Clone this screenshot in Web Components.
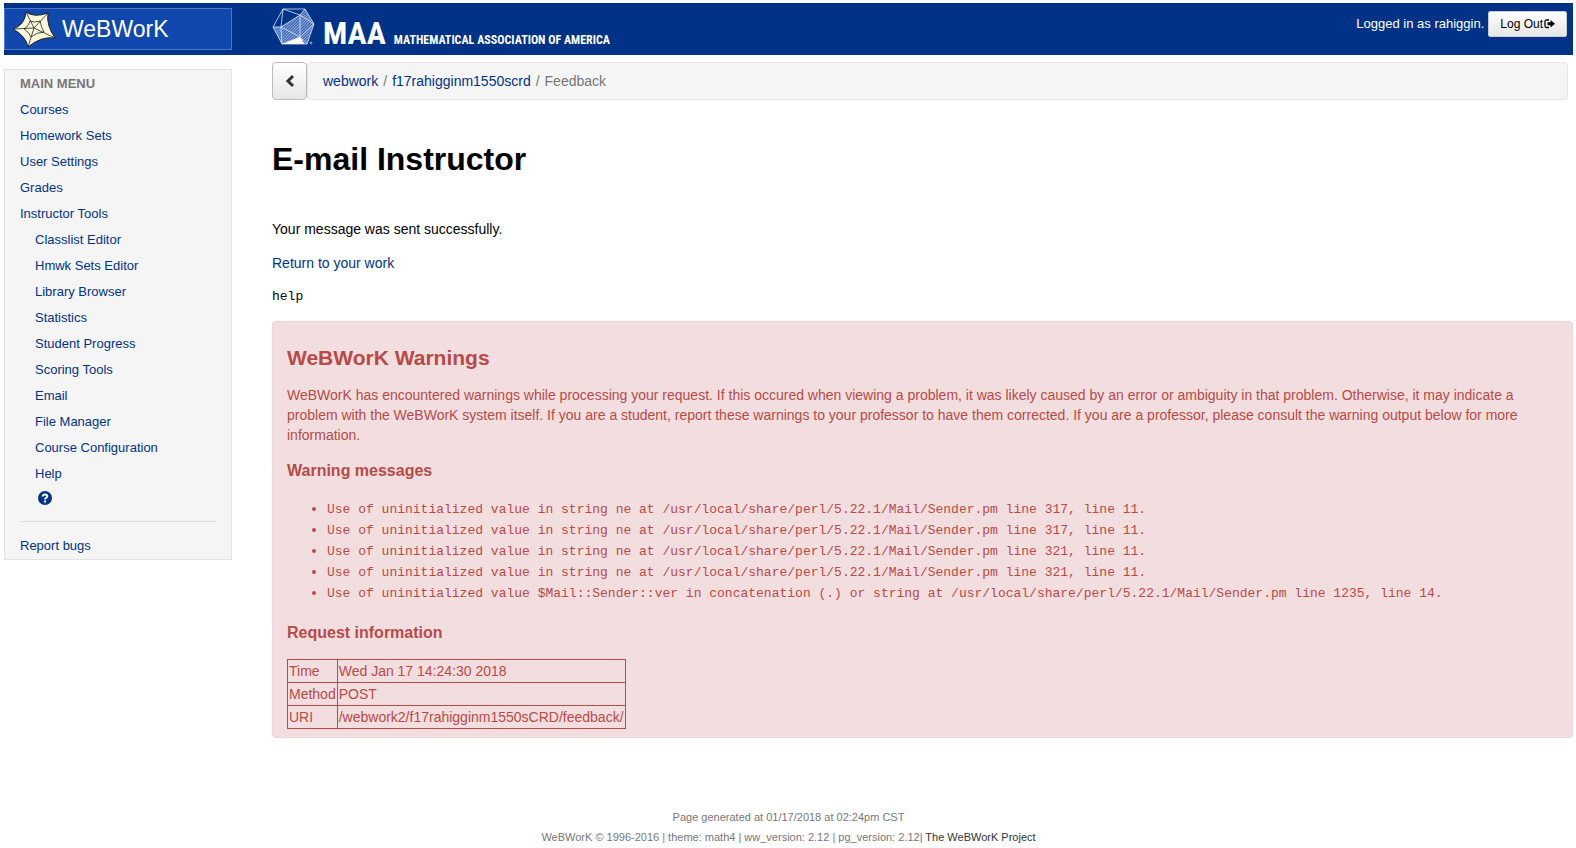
<!DOCTYPE html>
<html lang="en">
<head>
<meta charset="utf-8">
<title>WeBWorK : Feedback</title>
<style>
    body {
        margin: 3px 3px 0 4px;
        background: #fff;
        color: #000;
        font: 14px/20px "Liberation Sans", Arial, sans-serif;
    }
    .columns {
        display: grid;
        grid-template-columns: 228px 1fr;
        column-gap: 40px;
        align-items: start;
    }
    ww-sidebar { margin-top: 14px; }
    main { padding-top: 7px; min-width: 0; }
    h1 { margin: 39px 0 40px; font-size: 32px; line-height: 40px; }
    main p { margin: 0 0 14px; }
    main pre { margin: 0 0 14px; }
    main pre { font: 13px/20px "Liberation Mono", "Courier New", monospace; }
    code { font: 13px/14px "Liberation Mono", "Courier New", monospace; }
    main p a { color: #003388; text-decoration: none; }
</style>
</head>
<body>

<ww-masthead user="rahiggin"></ww-masthead>

<div class="columns">
    <ww-sidebar heading="Main Menu"></ww-sidebar>
    <main>
        <ww-breadcrumb>
            <a href="#webwork">webwork</a>
            <a href="#course">f17rahigginm1550scrd</a>
            <span>Feedback</span>
        </ww-breadcrumb>
        <h1>E-mail Instructor</h1>
        <p>Your message was sent successfully.</p>
        <p><a href="#work">Return to your work</a></p>
        <pre>help</pre>
        <ww-warnings>
            <li><code>Use of uninitialized value in string ne at /usr/local/share/perl/5.22.1/Mail/Sender.pm line 317, line 11.</code></li>
            <li><code>Use of uninitialized value in string ne at /usr/local/share/perl/5.22.1/Mail/Sender.pm line 317, line 11.</code></li>
            <li><code>Use of uninitialized value in string ne at /usr/local/share/perl/5.22.1/Mail/Sender.pm line 321, line 11.</code></li>
            <li><code>Use of uninitialized value in string ne at /usr/local/share/perl/5.22.1/Mail/Sender.pm line 321, line 11.</code></li>
            <li><code>Use of uninitialized value $Mail::Sender::ver in concatenation (.) or string at /usr/local/share/perl/5.22.1/Mail/Sender.pm line 1235, line 14.</code></li>
        </ww-warnings>
    </main>
</div>

<ww-footer></ww-footer>

<template id="masthead">
    <style>
        :host {
            display: grid;
            grid-template-columns: 228px 1fr auto;
            column-gap: 40px;
            height: 52px;
            background: #003388;
            color: #fff;
        }
        a { color: inherit; text-decoration: none; }
        .webwork {
            box-sizing: border-box;
            display: flex;
            align-items: center;
            gap: 6px;
            height: 42px;
            margin-top: 5px;
            padding-left: 8px;
            border: 1px solid #4a78c4;
            background: #1048ae;
            font-size: 23px;
        }
        .maa { display: flex; align-items: flex-end; gap: 8px; padding-bottom: 8px; white-space: nowrap; }
        .maa svg { align-self: flex-start; margin-top: 5px; }
        .maa b { font: bold 32px/28px "Roboto Condensed", "Liberation Sans", sans-serif; }
        .maa span { font: bold 12px/14px "Roboto Condensed", "Liberation Sans", sans-serif; }
        .login { display: flex; align-items: flex-start; gap: 4px; padding: 8px 6px 0 0; font-size: 13px; line-height: 26px; }
        button {
            display: flex;
            align-items: center;
            gap: 1px;
            height: 26px;
            padding: 0 11px;
            border: 1px solid #ccc;
            border-radius: 2px;
            background: linear-gradient(#fff, #e6e6e6);
            color: #000;
            font: 12px/18px "Liberation Sans", Arial, sans-serif;
        }
    </style>
    <a class="webwork" href="#home">
        <svg width="43" height="38" viewBox="0 0 43 38" aria-hidden="true">
            <path d="M13 2Q21 8 35 3Q33 15 42 28Q28 26 15 37Q13 26 0 19Q12 15 13 2Z" fill="#fbf8dc" stroke="#222" stroke-width="1"/>
            <path d="M13 2L21 18L35 3M21 18L42 28M21 18L15 37M21 18L0 19M17 11Q22 13 27 11Q28 17 31 22Q24 22 18 27Q16 22 11 19Q16 16 17 11Z" fill="none" stroke="#222" stroke-width="0.800"/>
        </svg>
        WeBWorK
    </a>
    <a class="maa" href="#maa">
        <svg width="43" height="38" viewBox="0 0 43 38" aria-hidden="true">
            <pattern id="hatch" width="2" height="2" patternUnits="userSpaceOnUse" patternTransform="rotate(-45)">
                <path d="M0 0H2V1H0Z" fill="#8fabdf"/>
            </pattern>
            <path d="M9 19L28 7L33 1L42 16L35 36L28 29L10 36L1 19Z" fill="#2f5cab"/>
            <path d="M9 19L28 7L33 1L42 16L35 36L28 29L10 36L1 19Z" fill="url(#hatch)"/>
            <path d="M10 36L28 29L33 36Z" fill="#fff"/>
            <path d="M11 1L33 1L42 16L35 36L10 36L1 19ZM11 1L28 7L33 1M28 7L42 16L28 29L28 7L9 19L11 1M1 19L9 19L28 29L35 36M9 19L10 36L28 29" fill="none" stroke="#dce6f8" stroke-width="0.800"/>
            <circle cx="39" cy="35" r="1" fill="none" stroke="#a9bfe8" stroke-width="0.800"/>
        </svg>
        <b>MAA</b>
        <span>MATHEMATICAL ASSOCIATION OF AMERICA</span>
    </a>
    <div class="login">
        <span>Logged in as <slot></slot>.</span>
        <button type="button">Log Out
            <svg width="11" height="10" viewBox="0 0 11 10" aria-hidden="true">
                <path d="M5 1H2.500Q1 1 1 2.500V7Q1 8.500 2.500 8.500H5" fill="none" stroke="#000" stroke-width="1.300"/>
                <path d="M3.500 3.300H6.500V1L11 4.800L6.500 8.600V6.300H3.500Z"/>
            </svg>
        </button>
    </div>
</template>

<template id="sidebar">
    <style>
        :host {
            display: block;
            box-sizing: border-box;
            padding: 1px 15px 0;
            border: 1px solid #e3e3e3;
            background: #f5f5f5;
            font-size: 13px;
            line-height: 26px;
        }
        h2 { margin: 0; color: #777; font-size: 13px; line-height: 26px; text-transform: uppercase; }
        ul { margin: 0; padding: 0; list-style: none; }
        ul ul { padding-left: 15px; }
        a { color: #003388; text-decoration: none; }
        .help { display: block; height: 24px; padding: 4px 3px 0; box-sizing: border-box; }
        .help svg { display: block; }
        hr { margin: 10px 0 11px; border: 0; border-top: 1px solid #ddd; }
    </style>
    <h2></h2>
    <nav>
        <ul>
            <li><a href="#courses">Courses</a></li>
            <li><a href="#sets">Homework Sets</a></li>
            <li><a href="#settings">User Settings</a></li>
            <li><a href="#grades">Grades</a></li>
            <li><a href="#tools">Instructor Tools</a>
                <ul>
                    <li><a href="#classlist">Classlist Editor</a></li>
                    <li><a href="#hmwk">Hmwk Sets Editor</a></li>
                    <li><a href="#library">Library Browser</a></li>
                    <li><a href="#statistics">Statistics</a></li>
                    <li><a href="#progress">Student Progress</a></li>
                    <li><a href="#scoring">Scoring Tools</a></li>
                    <li><a href="#email">Email</a></li>
                    <li><a href="#files">File Manager</a></li>
                    <li><a href="#config">Course Configuration</a></li>
                    <li><a href="#help">Help</a></li>
                    <li><a class="help" href="#help-page" aria-label="Help for this page">
                        <svg width="14" height="14" viewBox="0 0 14 14">
                            <circle cx="7" cy="7" r="7" fill="#003388"/>
                            <path d="M4.600 5.500Q4.800 3.500 7 3.500Q9.300 3.500 9.300 5.200Q9.300 6.300 8 6.900Q7.100 7.300 7.100 8.500M7.100 9.500V11.500" fill="none" stroke="#fff" stroke-width="2"/>
                        </svg>
                    </a></li>
                </ul>
            </li>
        </ul>
        <hr>
        <a href="#bugs">Report bugs</a>
    </nav>
</template>

<template id="breadcrumb">
    <style>
        :host { display: flex; height: 38px; margin-right: 5px; }
        button {
            display: flex;
            align-items: center;
            justify-content: center;
            width: 35px;
            padding: 0;
            border: 1px solid #bbb;
            border-radius: 4px;
            background: linear-gradient(#fff, #e6e6e6);
        }
        nav {
            flex: 1;
            display: flex;
            align-items: center;
            padding: 0 15px;
            border: 1px solid #e3e3e3;
            border-radius: 4px;
            background: #f5f5f5;
            color: #777;
        }
        ::slotted(a) { color: #003388; text-decoration: none; }
        ::slotted(a)::after { content: "/"; padding: 0 5px; color: #777; }
    </style>
    <button type="button" aria-label="Back">
        <svg width="10" height="14" viewBox="0 0 10 14"><path d="M8 2L3 7L8 12" fill="none" stroke="#333" stroke-width="3"/></svg>
    </button>
    <nav><slot></slot></nav>
</template>

<template id="warnings">
    <style>
        :host {
            display: block;
            padding: 14px 14px 8px;
            border: 1px solid #eed3d7;
            border-radius: 4px;
            background: #f2dede;
            color: #b94a48;
        }
        h2 { margin: 7px 0 12px; font-size: 21px; line-height: 30px; }
        h3 { margin: 0; font-size: 16px; line-height: 30px; }
        p { margin: 0 0 11px; }
        ul { margin: 12px 0 15px; padding-left: 40px; }
        ::slotted(li) { line-height: 21px; }
        table { margin-top: 11px; border-collapse: collapse; }
        th, td { padding: 1px; border: 1px solid #b94a48; text-align: left; font-weight: normal; }
    </style>
    <h2>WeBWorK Warnings</h2>
    <p>WeBWorK has encountered warnings while processing your request. If this occured when viewing a problem, it was likely caused by an error or ambiguity in that problem. Otherwise, it may indicate a problem with the WeBWorK system itself. If you are a student, report these warnings to your professor to have them corrected. If you are a professor, please consult the warning output below for more information.</p>
    <h3>Warning messages</h3>
    <ul><slot></slot></ul>
    <h3>Request information</h3>
    <table>
        <tr><th scope="row">Time</th><td>Wed Jan 17 14:24:30 2018</td></tr>
        <tr><th scope="row">Method</th><td>POST</td></tr>
        <tr><th scope="row">URI</th><td>/webwork2/f17rahigginm1550sCRD/feedback/</td></tr>
    </table>
</template>

<template id="footer">
    <style>
        :host {
            display: block;
            margin-top: 69px;
            color: #777;
            font-size: 11px;
            line-height: 20px;
            text-align: center;
        }
        a { color: #333; text-decoration: none; }
    </style>
    <div>Page generated at 01/17/2018 at 02:24pm CST</div>
    <div>WeBWorK © 1996-2016 | theme: math4 | ww_version: 2.12 | pg_version: 2.12| <a href="#project">The WeBWorK Project</a></div>
</template>

<script>
class WwElement extends HTMLElement {
    constructor() {
        super();

        const template = document.getElementById(this.localName.replace('ww-', ''));
        this.attachShadow({mode: 'open'});
        this.shadowRoot.appendChild(template.content.cloneNode(true));
    }
}

class WwMasthead extends WwElement {
    connectedCallback() {
        this.shadowRoot.querySelector('slot').textContent = this.getAttribute('user');
    }
}

class WwSidebar extends WwElement {
    connectedCallback() {
        this.shadowRoot.querySelector('h2').textContent = this.getAttribute('heading');
    }
}

class WwBreadcrumb extends WwElement {
    connectedCallback() {
        this.shadowRoot.querySelector('button').addEventListener('click', () => history.back());
    }
}

class WwWarnings extends WwElement {}
class WwFooter extends WwElement {}

window.customElements.define('ww-masthead', WwMasthead);
window.customElements.define('ww-sidebar', WwSidebar);
window.customElements.define('ww-breadcrumb', WwBreadcrumb);
window.customElements.define('ww-warnings', WwWarnings);
window.customElements.define('ww-footer', WwFooter);
</script>
</body>
</html>
